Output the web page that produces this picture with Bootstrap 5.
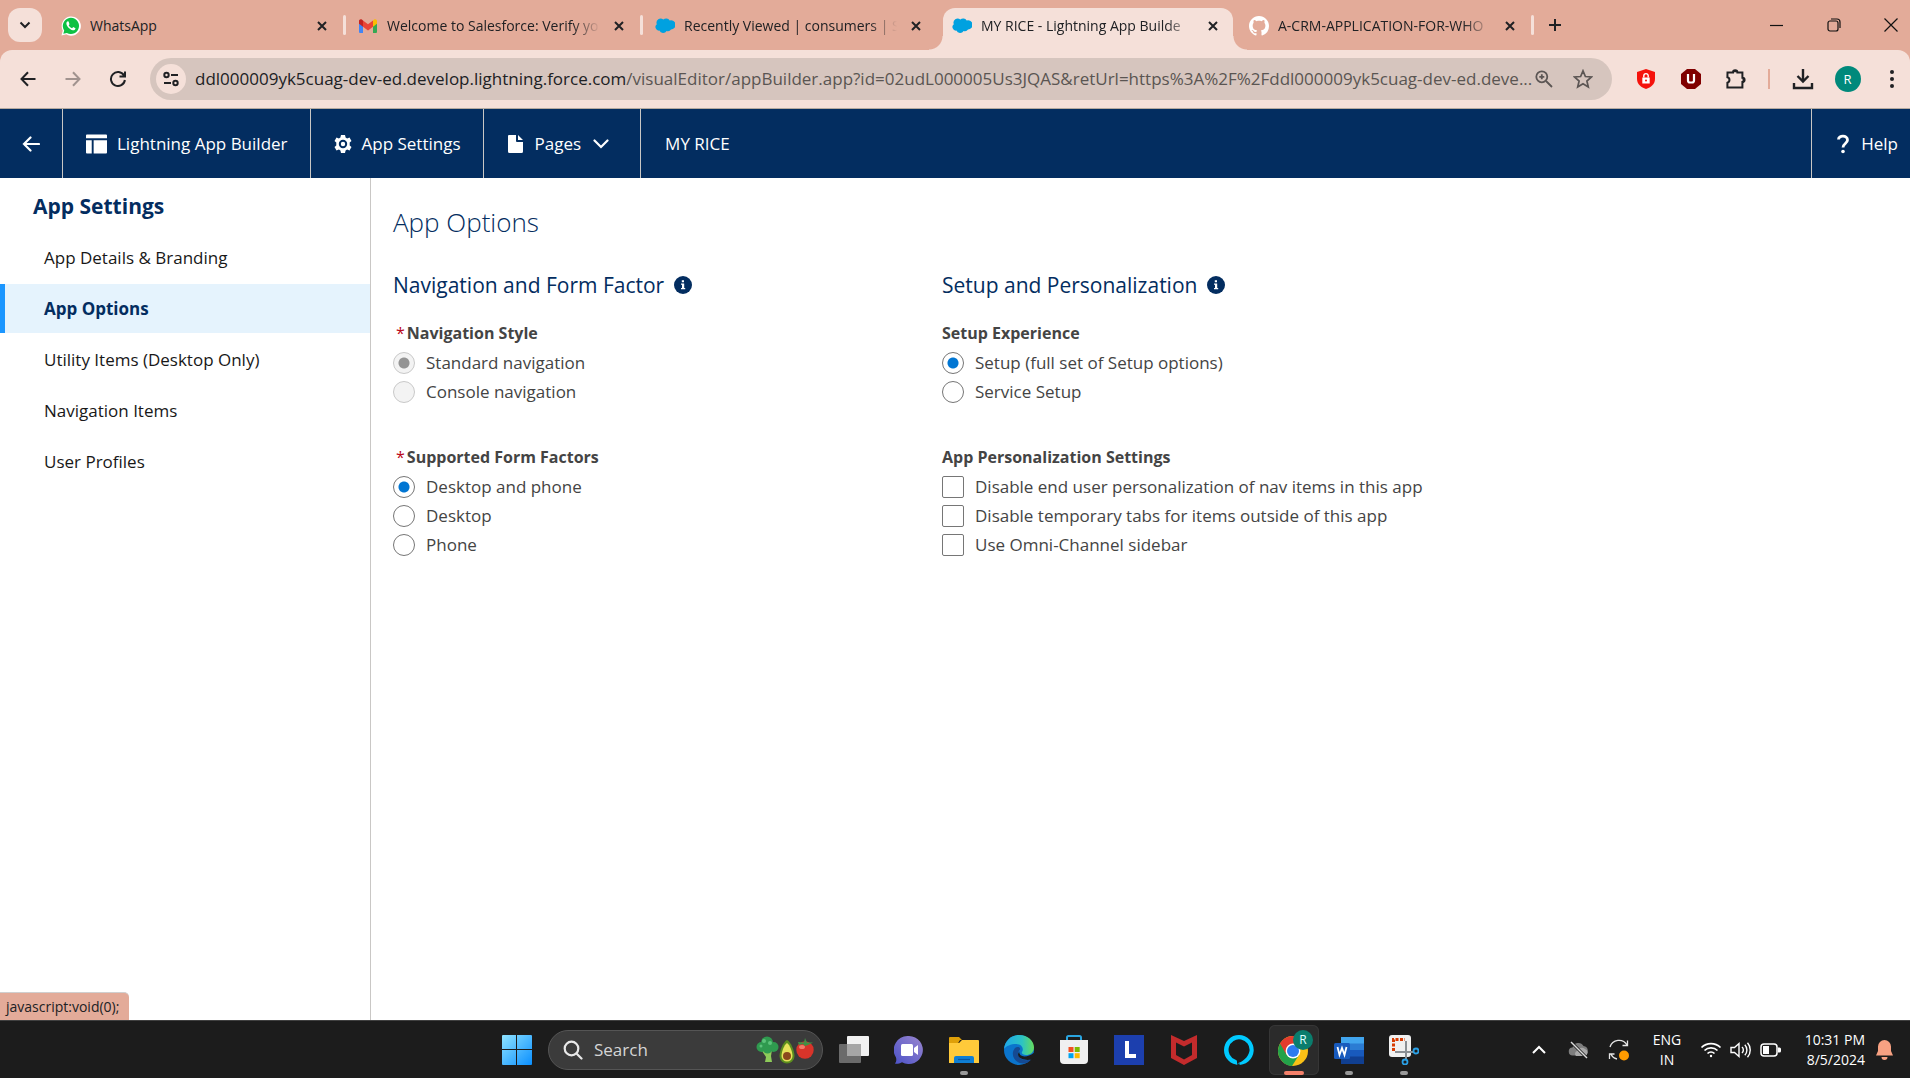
<!DOCTYPE html>
<html lang="en">
<head>
<meta charset="utf-8">
<meta name="viewport" content="width=device-width, initial-scale=1">
<title>MY RICE - Lightning App Builder</title>
<link href="https://cdn.jsdelivr.net/npm/bootstrap@5.3.0/dist/css/bootstrap.min.css" rel="stylesheet">
<style>
:root{--peach:#e3ab99;--blush:#f5e0d9;--navy:#032d60;--ink:#202124}
body{font-family:"Open Sans","Noto Sans",sans-serif;font-size:17px;line-height:24px;color:#444;background:#fff}
svg{display:block;flex:none}
button{background:none;border:0;padding:0;color:inherit;display:flex;align-items:center;justify-content:center}
a{color:inherit;text-decoration:none}
/* tab strip */
.tabstrip{background:var(--peach);height:50px;color:var(--ink);font-size:14px}
.tab-search{width:34px;height:34px;border-radius:12px;background:var(--blush);margin:0 7px 0 8px}
.btab{width:297px;height:50px;padding:8px 4px 0 3px;position:relative}
.btab-in{height:42px;padding:0 10px 6px 9px;gap:9px}
.btab-title{flex:1;min-width:0;overflow:hidden;white-space:nowrap;-webkit-mask-image:linear-gradient(90deg,#000 calc(100% - 28px),transparent);mask-image:linear-gradient(90deg,#000 calc(100% - 28px),transparent)}
.btab-title.is-short{-webkit-mask-image:none;mask-image:none}
.btab button{width:20px;height:20px}
.has-sep::after{content:"";position:absolute;right:0;top:15px;width:3px;height:20px;border-radius:2px;background:var(--blush)}
.btab.active .btab-in{background:var(--blush);border-radius:12px 12px 0 0;position:relative}
.btab.active .btab-in::before,.btab.active .btab-in::after{content:"";position:absolute;bottom:0;width:14px;height:14px}
.btab.active .btab-in::before{left:-14px;background:radial-gradient(circle at 0 0,transparent 13px,var(--blush) 14px)}
.btab.active .btab-in::after{right:-14px;background:radial-gradient(circle at 100% 0,transparent 13px,var(--blush) 14px)}
.plus-btn{width:42px;height:50px}
.win-btn{width:57px;height:50px}
.win-close{width:38px;margin-left:10px}
/* toolbar */
.toolbar-bg{background:var(--peach)}
.toolbar{background:var(--blush);height:59px;border-bottom:1px solid #b5aaa0;border-radius:12px 12px 0 0;color:var(--ink);padding:0 0 0 5px}
.tool-btn{width:45px;height:42px;flex:none}
.ext-btn{width:45px;height:42px;flex:none}
.menu-btn{width:36px;margin-left:4px}
.omnibox{height:42px;border-radius:21px;background:#d6c5be;padding:0 9px 0 6px;margin-left:10px;margin-right:11px;min-width:0}
.site-info{width:30px;height:30px;border-radius:50%;background:var(--blush);flex:none}
.url{font-size:17px;color:#5a5552;margin-left:9px;min-width:0}
.url b{font-weight:400;color:var(--ink)}
.omni-btn{width:18px;height:40px;color:#5c5654;flex:none}
.omni-star{width:30px;margin:0 5px 0 15px}
.ext-sep{width:2px;height:20px;background:var(--peach);flex:none;margin:0 10px}
.avatar{width:26px;height:26px;border-radius:50%;background:#00897b;color:#fff;font-size:13px}
/* app header */
.apphead{background:var(--navy);height:69px;color:#fff;font-size:17px}
.head-cell{border-right:1px solid #c9c7c5;height:100%;display:flex;align-items:center;padding:0 22px 0 23px;gap:10px}
.head-back{padding:0 22px}
.head-menu{padding-right:31px;gap:12px}
.head-help{border-right:0;border-left:1px solid #c9c7c5;padding-right:12px}
/* sidebar */
.side{width:371px;border-right:1px solid #c9c7c5;flex:none;padding-top:14px}
.side h2{font-size:21px;line-height:28px;font-weight:700;color:var(--navy);margin:0 0 13px;padding-left:33px}
.side a{display:flex;align-items:center;height:49px;margin-bottom:2px;padding-left:44px;color:#181818}
.side a.active{background:#e5f3fd;color:var(--navy);font-weight:700;box-shadow:inset 5px 0 #1b96ff}
/* content */
.page-title{font-size:26px;line-height:34px;font-weight:300;color:var(--navy);margin:0 0 31px}
.content{padding:27px 22px}
.opt-col{flex:0 1 549px}
.opt-col h3{font-size:21px;line-height:30px;font-weight:400;color:var(--navy);margin:0 0 21px;gap:10px}
.opt-group{margin-bottom:39px}
.opt-group legend{font-size:16px;line-height:24px;font-weight:700;color:#444;margin:0 0 3px;float:none}
.req{color:#ba0517;font-weight:400;padding:0 2px 0 3px}
.opt{display:flex;align-items:center;height:29px;gap:11px}
.opt input{appearance:none;width:22px;height:22px;margin:0;border:1px solid #767676;background:#fff;border-radius:2px;flex:none}
.opt input[type=radio]{border-radius:50%}
.opt input[type=radio]:checked{background:radial-gradient(circle,#0176d3 5px,transparent 6px),#fff}
.opt input:disabled{border-color:#c9c9c9;background:#f3f3f3}
.opt input[type=radio]:disabled:checked{background:radial-gradient(circle,#949494 5px,transparent 6px),#f3f3f3}
.status-tip{position:absolute;left:0;bottom:0;height:28px;background:var(--peach);border-top:1px solid #cfcfcf;border-radius:0 5px 0 0;color:var(--ink);font-size:14px;line-height:27px;padding:0 10px 0 6px}
/* taskbar */
.taskbar{height:58px;background:#1c1c1c;border-top:1px solid #404040;color:#fff;display:grid;grid-template-columns:1fr auto 1fr}
.dock{padding-left:10px}
.tsearch{width:275px;height:40px;border-radius:20px;background:#3b3b3b;border:1px solid #555;padding:0 8px 0 14px;margin:0 3px 0 4px}
.tsearch input{background:none;border:0;outline:0;color:#d5d5d5;font-size:17px;width:150px;padding:0 0 0 11px}
.tsearch input::placeholder{color:#d5d5d5;opacity:1}
.tapp{width:55px;height:50px;position:relative;flex:none}
.tapp.run::after{content:"";position:absolute;bottom:0;left:24px;width:8px;height:4px;border-radius:2px;background:#999}
.tapp.front{background:#2b2b2b;border-radius:6px;box-shadow:inset 0 0 0 1px #363636;width:50px;margin:0 2px 0 3px}
.tapp.front::after{left:15px;width:20px;background:#f4806a}
.tray{font-size:14px;line-height:20px}
.tray button{height:50px;width:40px;flex:none}
.tray .t-lang{width:56px}
.tray .t-status{width:90px}
.tray .t-clock{width:80px}
.tray .t-bell{width:38px;margin-right:7px}
</style>
</head>
<body class="vh-100 d-flex flex-column overflow-hidden">
<svg width="0" height="0" class="position-absolute" aria-hidden="true">
  <symbol id="x" viewBox="0 0 12 12"><path d="M2 2l8 8M10 2l-8 8" stroke="currentColor" stroke-width="2"/></symbol>
  <symbol id="sf" viewBox="0 0 20 18"><path d="M8.3 2.6A4.3 4.3 0 0 1 14.7 3.4 4.6 4.6 0 1 1 16 12.4a3.6 3.6 0 0 1-4.4 1.5 4 4 0 0 1-7.2-.3A3.6 3.6 0 0 1 1.800 7.200 4.100 4.100 0 0 1 8.300 2.600z" fill="#00a1e0"/></symbol>
  <symbol id="info" viewBox="0 0 18 18"><circle cx="9" cy="9" r="9" fill="#032d60"/><path d="M7.800 4.200h2.200v2.100H7.800zM7 7.500h3.200v4.400h1v1.300H7v-1.300h1V8.800H7z" fill="#fff"/></symbol>
</svg>

<header>
  <nav class="tabstrip d-flex align-items-center" aria-label="Browser tabs">
    <button class="tab-search" aria-label="Search tabs"><svg width="12" height="8" viewBox="0 0 12 8"><path d="M1.500 1.500L6 6l4.500-4.500" fill="none" stroke="#202124" stroke-width="2"/></svg></button>
    <div class="btab has-sep"><div class="btab-in d-flex align-items-center">
      <svg width="20" height="20" viewBox="0 0 20 20"><path d="M.500 19.500l1.300-4.900A9.600 9.600 0 1 1 5.300 18.300z" fill="#fff"/><path d="M2.300 17.700l.900-3.300a8.100 8.100 0 1 1 2.700 2.500z" fill="#0dc143"/><path d="M6.900 5.200c-.6 0-1.700 1-1.500 2.500.3 2.300 3.300 6 6.400 6.500 1.500.2 2.600-.6 2.700-2l-2.300-1.100-1.100 1.200c-1.600-.5-2.800-1.700-3.400-3l.8-1.100-.9-2.700z" fill="#fff"/></svg>
      <span class="btab-title is-short">WhatsApp</span><button aria-label="Close tab"><svg width="12" height="12"><use href="#x"/></svg></button></div></div>
    <div class="btab has-sep"><div class="btab-in d-flex align-items-center">
      <svg width="20" height="16" viewBox="0 0 20 16"><path d="M1 3v11a1 1 0 0 0 1 1h3V6z" fill="#4285f4"/><path d="M19 3v11a1 1 0 0 1-1 1h-3V6z" fill="#34a853"/><path d="M5 2.500v6.200l5 3.800 5-3.800V2.500L10 6.300z" fill="#ea4335"/><path d="M1 3v2.700l4 3V2.400L3.800 1.500C2.600.600 1 1.500 1 3z" fill="#c5221f"/><path d="M19 3v2.700l-4 3V2.400l1.200-.900C17.400.600 19 1.500 19 3z" fill="#fbbc04"/></svg>
      <span class="btab-title">Welcome to Salesforce: Verify yo</span><button aria-label="Close tab"><svg width="12" height="12"><use href="#x"/></svg></button></div></div>
    <div class="btab"><div class="btab-in d-flex align-items-center">
      <svg width="20" height="18"><use href="#sf"/></svg>
      <span class="btab-title">Recently Viewed | consumers | S</span><button aria-label="Close tab"><svg width="12" height="12"><use href="#x"/></svg></button></div></div>
    <div class="btab active"><div class="btab-in d-flex align-items-center">
      <svg width="20" height="18"><use href="#sf"/></svg>
      <span class="btab-title">MY RICE - Lightning App Builde</span><button aria-label="Close tab"><svg width="12" height="12"><use href="#x"/></svg></button></div></div>
    <div class="btab has-sep"><div class="btab-in d-flex align-items-center">
      <svg width="20" height="20" viewBox="0 0 16 16"><path fill="#fff" d="M8 0C3.580 0 0 3.580 0 8c0 3.540 2.290 6.530 5.470 7.590.4.070.550-.170.550-.380 0-.190-.010-.820-.010-1.490-2.010.370-2.530-.490-2.690-.940-.090-.230-.480-.940-.820-1.130-.280-.150-.680-.520-.010-.530.630-.010 1.080.580 1.230.820.720 1.210 1.870.870 2.330.660.070-.520.280-.870.510-1.070-1.780-.200-3.640-.890-3.640-3.950 0-.870.310-1.590.820-2.150-.080-.200-.360-1.020.080-2.120 0 0 .670-.210 2.200.820.640-.180 1.320-.270 2-.270s1.360.090 2 .270c1.530-1.040 2.200-.820 2.200-.820.440 1.100.160 1.920.080 2.120.510.560.820 1.270.820 2.150 0 3.070-1.870 3.750-3.650 3.950.290.250.540.730.540 1.480 0 1.070-.010 1.930-.010 2.200 0 .210.150.460.550.380A8.010 8.010 0 0 0 16 8c0-4.420-3.580-8-8-8z"/></svg>
      <span class="btab-title">A-CRM-APPLICATION-FOR-WHO</span><button aria-label="Close tab"><svg width="12" height="12"><use href="#x"/></svg></button></div></div>
    <button class="plus-btn" aria-label="New tab"><svg width="14" height="14" viewBox="0 0 14 14"><path d="M7 1v12M1 7h12" stroke="#202124" stroke-width="2"/></svg></button>
    <div class="ms-auto d-flex">
      <button class="win-btn" aria-label="Minimize"><svg width="13" height="13" viewBox="0 0 13 13"><path d="M0 6.500h13" stroke="#111" stroke-width="1.200"/></svg></button>
      <button class="win-btn" aria-label="Restore"><svg width="14" height="14" viewBox="0 0 14 14" fill="none" stroke="#111" stroke-width="1.200"><rect x="1" y="3" width="10" height="10" rx="2"/><path d="M4 1h6a3 3 0 0 1 3 3v6"/></svg></button>
      <button class="win-btn win-close" aria-label="Close"><svg width="14" height="14" viewBox="0 0 14 14"><path d="M.500.500l13 13M13.500.500l-13 13" stroke="#111" stroke-width="1.200"/></svg></button>
    </div>
  </nav>
  <div class="toolbar-bg"><div class="toolbar d-flex align-items-center">
    <button class="tool-btn" aria-label="Back"><svg width="16" height="16" viewBox="0 0 16 16"><path d="M15.500 8H1.500M8 1.200L1.500 8 8 14.800" fill="none" stroke="#202124" stroke-width="2"/></svg></button>
    <button class="tool-btn" aria-label="Forward"><svg width="16" height="16" viewBox="0 0 16 16"><path d="M.500 8h14M8 1.200L14.500 8 8 14.800" fill="none" stroke="#a1938f" stroke-width="2"/></svg></button>
    <button class="tool-btn" aria-label="Reload"><svg width="18" height="18" viewBox="0 0 18 18"><path d="M15 5.500A7 7 0 1 0 15.900 10M16 1.500v5h-5.500" fill="none" stroke="#202124" stroke-width="2"/></svg></button>
    <div class="omnibox d-flex align-items-center flex-grow-1">
      <button class="site-info" aria-label="Site information"><svg width="18" height="18" viewBox="0 0 18 18" fill="none" stroke="#202124" stroke-width="2"><circle cx="4.500" cy="5" r="2.200"/><path d="M9 5h7M2 13h7"/><circle cx="13.500" cy="13" r="2.200"/></svg></button>
      <span class="url flex-grow-1 text-nowrap overflow-hidden"><b>ddl000009yk5cuag-dev-ed.develop.lightning.force.com</b>/visualEditor/appBuilder.app?id=02udL000005Us3JQAS&amp;retUrl=https%3A%2F%2Fddl000009yk5cuag-dev-ed.deve...</span>
      <button class="omni-btn" aria-label="Zoom"><svg width="18" height="18" viewBox="0 0 18 18" fill="none" stroke="currentColor" stroke-width="1.800"><circle cx="6.800" cy="6.800" r="5.500"/><path d="M11 11l6 6M6.800 4.300v5M4.300 6.800h5"/></svg></button>
      <button class="omni-btn omni-star" aria-label="Bookmark"><svg width="20" height="20" viewBox="0 0 20 20"><path d="M10 1.800l2.400 5.700 6.100.5-4.600 4 1.400 6L10 14.800 4.700 18l1.400-6-4.600-4 6.100-.5z" fill="none" stroke="currentColor" stroke-width="1.700"/></svg></button>
    </div>
    <button class="ext-btn" aria-label="Privacy shield"><svg width="20" height="20" viewBox="0 0 20 20"><path d="M10 0l9 3v7c0 5-4 8.500-9 10-5-1.500-9-5-9-10V3z" fill="#f5120c"/><path d="M6.300 8.500h7.400v6H6.300z" fill="#fff"/><path d="M7.800 8.500V6.800a2.200 2.200 0 0 1 4.400 0v1.700" fill="none" stroke="#fff" stroke-width="1.400"/><circle cx="10" cy="11.500" r="1" fill="#f5120c"/></svg></button>
    <button class="ext-btn" aria-label="uBlock"><svg width="20" height="20" viewBox="0 0 20 20"><path d="M6 0h8l6 5v10l-6 5H6l-6-5V5z" fill="#800000"/><path d="M7 5v6.500a2 2 0 0 0 2 2h2a2 2 0 0 0 2-2V5" fill="none" stroke="#fff" stroke-width="2.200"/></svg></button>
    <button class="ext-btn" aria-label="Extensions"><svg width="22" height="22" viewBox="0 0 22 22"><path d="M2.500 4.500H8a2.200 2.200 0 0 1 4.400 0h5v5.200a2.200 2.200 0 0 1 0 4.400v5.400h-15v-4.800a2.800 2.800 0 0 0 0-5.400z" fill="none" stroke="#202124" stroke-width="2"/><path d="M8 4.300a2.200 2.200 0 0 1 4.400 0zM17.500 9.700a2.200 2.200 0 0 1 0 4.400z" fill="#202124"/></svg></button>
    <span class="ext-sep"></span>
    <button class="ext-btn" aria-label="Downloads"><svg width="22" height="22" viewBox="0 0 22 22"><path d="M11 1v12M5.500 8l5.500 5.500L16.500 8M2 15v5h18v-5" fill="none" stroke="#202124" stroke-width="2.400"/></svg></button>
    <button class="ext-btn" aria-label="Profile"><span class="avatar d-flex align-items-center justify-content-center">R</span></button>
    <button class="ext-btn menu-btn" aria-label="Menu"><svg width="6" height="20" viewBox="0 0 6 20" fill="#202124"><circle cx="3" cy="3" r="2"/><circle cx="3" cy="10" r="2"/><circle cx="3" cy="17" r="2"/></svg></button>
  </div></div>
  <nav class="apphead d-flex align-items-center" aria-label="App Builder">
    <a href="#" class="head-cell head-back" aria-label="Back"><svg width="18" height="16" viewBox="0 0 18 16"><path d="M17 8H2M8.500 1.500L2 8l6.500 6.500" fill="none" stroke="#fff" stroke-width="2.200" stroke-linecap="round"/></svg></a>
    <a href="#" class="head-cell"><svg width="21" height="20" viewBox="0 0 22 20" fill="#fff"><path d="M1 0h20a1 1 0 0 1 1 1v3H0V1a1 1 0 0 1 1-1zM0 6h6v14H1a1 1 0 0 1-1-1zM8 6h14v13a1 1 0 0 1-1 1H8z"/></svg>Lightning App Builder</a>
    <a href="#" class="head-cell"><svg width="18" height="20" viewBox="0 0 18 20"><path fill="#fff" fill-rule="evenodd" d="M7 1h4l.6 2.500 1.500.9 2.400-.8 2 3.300-1.800 1.700v2.800l1.800 1.700-2 3.300-2.400-.8-1.500.9L11 19H7l-.6-2.500-1.500-.9-2.400.8-2-3.300 1.800-1.700V8.600L.5 6.900l2-3.300 2.400.8 1.500-.9zM9 5.800a4.200 4.200 0 1 0 0 8.400A4.200 4.200 0 0 0 9 5.800zm0 2a2.200 2.200 0 1 1 0 4.400 2.200 2.200 0 0 1 0-4.400z"/></svg>App Settings</a>
    <a href="#" class="head-cell head-menu"><svg width="16" height="18" viewBox="0 0 16 18" fill="#fff"><path d="M2 0h7v6a1 1 0 0 0 1 1h6v9.500a1.500 1.500 0 0 1-1.500 1.500h-12A1.500 1.500 0 0 1 1 16.500V1a1 1 0 0 1 1-1zM11 0l5 5h-5z"/></svg>Pages<svg width="16" height="10" viewBox="0 0 16 10"><path d="M1.500 1.500L8 8l6.500-6.500" fill="none" stroke="#fff" stroke-width="2.200" stroke-linecap="round"/></svg></a>
    <span class="px-4">MY RICE</span>
    <a href="#" class="head-cell head-help ms-auto"><svg width="16" height="20" viewBox="0 0 16 20"><path d="M3.500 5.500C3.500 1 12.500 1 12.500 6c0 3.500-4.500 3.500-4.500 7.500" fill="none" stroke="#fff" stroke-width="2.800"/><circle cx="8" cy="17.500" r="1.800" fill="#fff"/></svg>Help</a>
  </nav>
</header>

<main class="flex-grow-1 d-flex position-relative overflow-hidden">
  <nav class="side" aria-label="App Settings">
    <h2>App Settings</h2>
    <a href="#">App Details &amp; Branding</a>
    <a href="#" class="active" aria-current="page">App Options</a>
    <a href="#">Utility Items (Desktop Only)</a>
    <a href="#">Navigation Items</a>
    <a href="#">User Profiles</a>
  </nav>
  <section class="content flex-grow-1">
    <h1 class="page-title">App Options</h1>
    <form class="d-flex">
      <div class="opt-col">
        <h3 class="d-flex align-items-center">Navigation and Form Factor <svg width="18" height="18"><use href="#info"/></svg></h3>
        <fieldset class="opt-group">
          <legend><span class="req">*</span>Navigation Style</legend>
          <label class="opt"><input type="radio" name="nav" checked disabled>Standard navigation</label>
          <label class="opt"><input type="radio" name="nav" disabled>Console navigation</label>
        </fieldset>
        <fieldset class="opt-group">
          <legend><span class="req">*</span>Supported Form Factors</legend>
          <label class="opt"><input type="radio" name="ff" checked>Desktop and phone</label>
          <label class="opt"><input type="radio" name="ff">Desktop</label>
          <label class="opt"><input type="radio" name="ff">Phone</label>
        </fieldset>
      </div>
      <div class="opt-col">
        <h3 class="d-flex align-items-center">Setup and Personalization <svg width="18" height="18"><use href="#info"/></svg></h3>
        <fieldset class="opt-group">
          <legend>Setup Experience</legend>
          <label class="opt"><input type="radio" name="setup" checked>Setup (full set of Setup options)</label>
          <label class="opt"><input type="radio" name="setup">Service Setup</label>
        </fieldset>
        <fieldset class="opt-group">
          <legend>App Personalization Settings</legend>
          <label class="opt"><input type="checkbox">Disable end user personalization of nav items in this app</label>
          <label class="opt"><input type="checkbox">Disable temporary tabs for items outside of this app</label>
          <label class="opt"><input type="checkbox">Use Omni-Channel sidebar</label>
        </fieldset>
      </div>
    </form>
  </section>
  <div class="status-tip">javascript:void(0);</div>
</main>

<footer class="taskbar align-items-center">
  <span></span>
  <div class="dock d-flex align-items-center">
    <button class="tapp" aria-label="Start"><svg width="30" height="30" viewBox="0 0 30 30"><defs><linearGradient id="wg" x1="0" y1="0" x2="1" y2="1" gradientUnits="objectBoundingBox"><stop stop-color="#8fe3ff"/><stop offset="1" stop-color="#0a8fff"/></linearGradient><mask id="wm"><path d="M0 0h14v14H0zM15 0h15v14H15zM0 15h14v15H0zM15 15h15v15H15z" fill="#fff"/></mask></defs><rect width="30" height="30" rx="1" fill="url(#wg)" mask="url(#wm)"/></svg></button>
    <div class="tsearch d-flex align-items-center">
      <svg width="20" height="20" viewBox="0 0 20 20" fill="none" stroke="#e8e8e8" stroke-width="2.200"><circle cx="8.500" cy="8.500" r="6.800"/><path d="M13.500 13.500l5 5" stroke-linecap="round"/></svg>
      <input type="text" placeholder="Search" aria-label="Search">
      <svg class="ms-auto" width="58" height="28" viewBox="0 0 58 28"><path d="M8 14h8l-1 6 1 6H9l1-5-4-6z" fill="#8ecb5a"/><g fill="#2f9a4f"><circle cx="5.500" cy="11" r="5"/><circle cx="11" cy="6.500" r="6"/><circle cx="17.500" cy="11" r="5"/><circle cx="11.500" cy="13" r="4.500"/></g><g fill="#5cc27a"><circle cx="8" cy="5" r="2"/><circle cx="14" cy="7" r="2"/><circle cx="5" cy="10" r="1.500"/></g><path d="M31 4c4 2 7.500 11 7.500 16a7.300 7.300 0 0 1-15 0C23.500 15 27 6 31 4z" fill="#5b8c1e"/><path d="M31 7c3 2 5.500 9 5.500 13a5.500 5.500 0 0 1-11 0c0-4 2.500-11 5.500-13z" fill="#e6e25a"/><circle cx="31" cy="20" r="4" fill="#8b4a1d"/><circle cx="49" cy="14" r="8.700" fill="#d8342a"/><ellipse cx="46" cy="11" rx="3" ry="2" fill="#f37a68"/><path d="M42 6l6 .500L49 2l2 4.500 6 0-5 2.500-3 1-2-2-4 1z" fill="#3f9146"/></svg>
    </div>
    <button class="tapp" aria-label="Task view"><svg width="30" height="28" viewBox="0 0 30 28"><rect x="8" width="22" height="20" rx="1" fill="#f1f1f1"/><rect y="8" width="22" height="19" rx="1" fill="#6b6b6b"/><path d="M8 8h14v12H8z" fill="#a6a6a6"/></svg></button>
    <button class="tapp" aria-label="Chat"><svg width="30" height="30" viewBox="0 0 30 30"><defs><linearGradient id="cg" x1="1" y1="0" x2="0" y2="1"><stop stop-color="#9a86cf"/><stop offset="1" stop-color="#4b52c8"/></linearGradient></defs><path d="M15 1a14 14 0 1 1-7 26.200C5 29 2 29 1 28.500c1.500-2 1.500-4 1-6A14 14 0 0 1 15 1z" fill="url(#cg)"/><rect x="7" y="9" width="12" height="12" rx="1.500" fill="#fff"/><path d="M20 13l4-3v10l-4-3z" fill="#fff"/></svg></button>
    <button class="tapp run" aria-label="File Explorer"><svg width="30" height="28" viewBox="0 0 30 28"><path d="M0 2a1 1 0 0 1 1-1h9l3 3h-2l-3 5H0z" fill="#dfa009"/><path d="M0 7h10l3-3h16a1 1 0 0 1 1 1v22H0z" fill="#ffca3a"/><path d="M5 27v-5a2 2 0 0 1 2-2h16a2 2 0 0 1 2 2v5z" fill="#0f7fd4"/><path d="M9 23.500h12" stroke="#0a56a0" stroke-width="1.200"/></svg></button>
    <button class="tapp" aria-label="Edge"><svg width="30" height="30" viewBox="0 0 30 30"><defs><linearGradient id="eg"><stop stop-color="#1fa7e8"/><stop offset=".600" stop-color="#2cc3c4"/><stop offset="1" stop-color="#66dc5c"/></linearGradient></defs><circle cx="15" cy="15" r="15" fill="#0b74cc"/><path d="M0 14C1 5 8 0 15 0c9 0 15 6 15 12.500 0 5-4 7.500-8 7.500-3 0-5-1.500-4-3 2-2.500.5-8-6-8-5 0-10 2-12 5z" fill="url(#eg)"/><path d="M11 13c-5 6-1 15 8 15.500 3.500 0 7-2 8.500-4.500-4 2-10 1.500-12-2-2-3-1.500-5 .5-7.500C17 12 13 11 11 13z" fill="#154a93"/><path d="M15.500 16c-1 2.500 1 5.500 5 5.500 3.500 0 6-1 10-4v5l-2 1.500C25 26 14 25 14 19z" fill="#1c1c1c"/></svg></button>
    <button class="tapp" aria-label="Store"><svg width="30" height="30" viewBox="0 0 30 30"><path d="M8 6V2.500A1.500 1.500 0 0 1 9.500 1h11A1.500 1.500 0 0 1 22 2.500V6" fill="none" stroke="#2aa5e0" stroke-width="2"/><path d="M1 5h28v20a4 4 0 0 1-4 4H5a4 4 0 0 1-4-4z" fill="#f0f0f0"/><path d="M9.500 12h5v5h-5z" fill="#f25022"/><path d="M15.700 12h5v5h-5z" fill="#7fba00"/><path d="M9.500 18.200h5v5h-5z" fill="#00a4ef"/><path d="M15.700 18.200h5v5h-5z" fill="#ffb900"/></svg></button>
    <button class="tapp" aria-label="L"><svg width="30" height="30" viewBox="0 0 30 30"><path d="M0 0h30v30H0z" fill="#1c3fae"/><path d="M11 6h4v13h7v4H11z" fill="#fff"/></svg></button>
    <button class="tapp" aria-label="McAfee"><svg width="28" height="30" viewBox="0 0 28 30"><path d="M1 0l13 6L27 0v23l-13 7-13-7z" fill="#c32b2c"/><path d="M6 7.500l8 4 8-4V20l-8 4.500L6 20z" fill="#1c1c1c"/></svg></button>
    <button class="tapp" aria-label="Alexa"><svg width="30" height="30" viewBox="0 0 30 30"><path fill="#00caff" fill-rule="evenodd" d="M15 0a15 15 0 1 1-2 29.900v-3.200c0-1-.4-1.600-1.500-2A10.500 10.500 0 1 1 25.500 16C24 23 18 27 13 28.500 18 28 15 30 15 30A15 15 0 0 1 15 0z"/></svg></button>
    <button class="tapp run front" aria-label="Chrome"><svg width="38" height="40" viewBox="0 0 38 40"><g transform="translate(3 6)"><circle cx="15" cy="15" r="15" fill="#fbc116"/><path d="M15 15L2 7.500A15 15 0 0 0 14 30l7-11z" fill="#23a24a"/><path d="M2 7.500A15 15 0 0 1 28 7.500H15L8.500 18.700z" fill="#e33b2e"/><circle cx="15" cy="15" r="7.400" fill="#fff"/><circle cx="15" cy="15" r="6" fill="#2d7bf0"/></g><circle cx="28" cy="10" r="10" fill="#0a7d6d"/><text x="28" y="14" font-size="12" fill="#dff" text-anchor="middle">R</text></svg></button>
    <button class="tapp run" aria-label="Word"><svg width="30" height="28" viewBox="0 0 30 28"><path d="M7 1h23v7H7z" fill="#41a5ee"/><path d="M7 7.500h23v7H7z" fill="#2b7cd3"/><path d="M7 14h23v7H7z" fill="#185abd"/><path d="M7 20.500h23V28H7z" fill="#103f91"/><rect y="7" width="16" height="16" rx="1.500" fill="#185abd"/><path d="M3.500 11l2 8L8 12l2.500 7 2-8" fill="none" stroke="#fff" stroke-width="1.800"/></svg></button>
    <button class="tapp run" aria-label="Snipping Tool"><svg width="30" height="30" viewBox="0 0 30 30"><rect width="22" height="22" rx="3" fill="#f0f0f0"/><path d="M4.500 16V4.500H16" fill="none" stroke="#d83b01" stroke-width="3" stroke-dasharray="3 1.500"/><path d="M17 6v18M6 17h18" stroke="#8a8f94" stroke-width="2"/><g fill="none" stroke="#2aa0e6" stroke-width="1.800"><circle cx="27" cy="16" r="2.500"/><circle cx="16" cy="27" r="2.500"/></g></svg></button>
  </div>
  <div class="tray d-flex align-items-center justify-content-end">
    <button aria-label="Show hidden icons"><svg width="14" height="9" viewBox="0 0 14 9"><path d="M1 8l6-6 6 6" fill="none" stroke="#fff" stroke-width="2"/></svg></button>
    <button aria-label="OneDrive"><svg width="22" height="18" viewBox="0 0 22 18"><path d="M5 14.500a4 4 0 0 1-.5-8A6 6 0 0 1 15.500 5 5 5 0 0 1 17 14.500z" fill="#7d7d7d"/><path d="M8 15a3 3 0 0 1 1-5 5 5 0 0 1 8-2 3.700 3.700 0 0 1 0 7z" fill="#a8a8a8"/><path d="M3 1l16 16" stroke="#1c1c1c" stroke-width="3"/><path d="M3 1l16 16" stroke="#ddd" stroke-width="1.400"/></svg></button>
    <button aria-label="Updates"><svg width="22" height="22" viewBox="0 0 22 22"><path d="M2 8A9.300 9.300 0 0 1 19 6M19.500 1.500v5h-5M1.500 20v-5h5M3 15.500a9 9 0 0 0 6 4.500" fill="none" stroke="#e6e6e6" stroke-width="1.300"/><circle cx="16" cy="16.500" r="5" fill="#ff9b00"/></svg></button>
    <button class="t-lang text-center">ENG<br>IN</button>
    <button class="t-status gap-2" aria-label="Network, volume, battery">
      <svg width="22" height="17" viewBox="0 0 22 17" fill="none" stroke="#fff" stroke-width="1.700"><path d="M1.500 6.500a13.400 13.400 0 0 1 19 0M4.500 9.500a9.200 9.200 0 0 1 13 0M7.500 12.500a5 5 0 0 1 7 0"/><circle cx="11" cy="15" r="1.200" fill="#fff" stroke="none"/></svg>
      <svg width="22" height="18" viewBox="0 0 22 18" fill="none" stroke="#fff" stroke-width="1.400"><path d="M1 6.500h3.500L9 2.500v13l-4.500-4H1zM12 6a4 4 0 0 1 0 6M14.800 3.800a7.500 7.500 0 0 1 0 10.400M17.500 1.800a10.800 10.800 0 0 1 0 14.400"/></svg>
      <svg width="21" height="14" viewBox="0 0 21 14"><rect x="1" y="1" width="16" height="12" rx="3" fill="none" stroke="#fff" stroke-width="1.500"/><path d="M3 3h6v8H3zM18 4.500h1.500a1.500 1.500 0 0 1 1.500 1.500v2a1.500 1.500 0 0 1-1.500 1.500H18z" fill="#fff"/></svg>
    </button>
    <button class="t-clock text-end justify-content-end">10:31 PM<br>8/5/2024</button>
    <button class="t-bell" aria-label="Notifications"><svg width="17" height="20" viewBox="0 0 17 20" fill="#f7a182"><path d="M8.500 0a6.500 6.500 0 0 1 6.500 6.500V11l2 4.500H0L2 11V6.500A6.500 6.500 0 0 1 8.500 0zM5.500 17h6a3 3 0 0 1-6 0z"/></svg></button>
  </div>
</footer>
<script src="https://cdn.jsdelivr.net/npm/bootstrap@5.3.0/dist/js/bootstrap.bundle.min.js"></script>
</body>
</html>
